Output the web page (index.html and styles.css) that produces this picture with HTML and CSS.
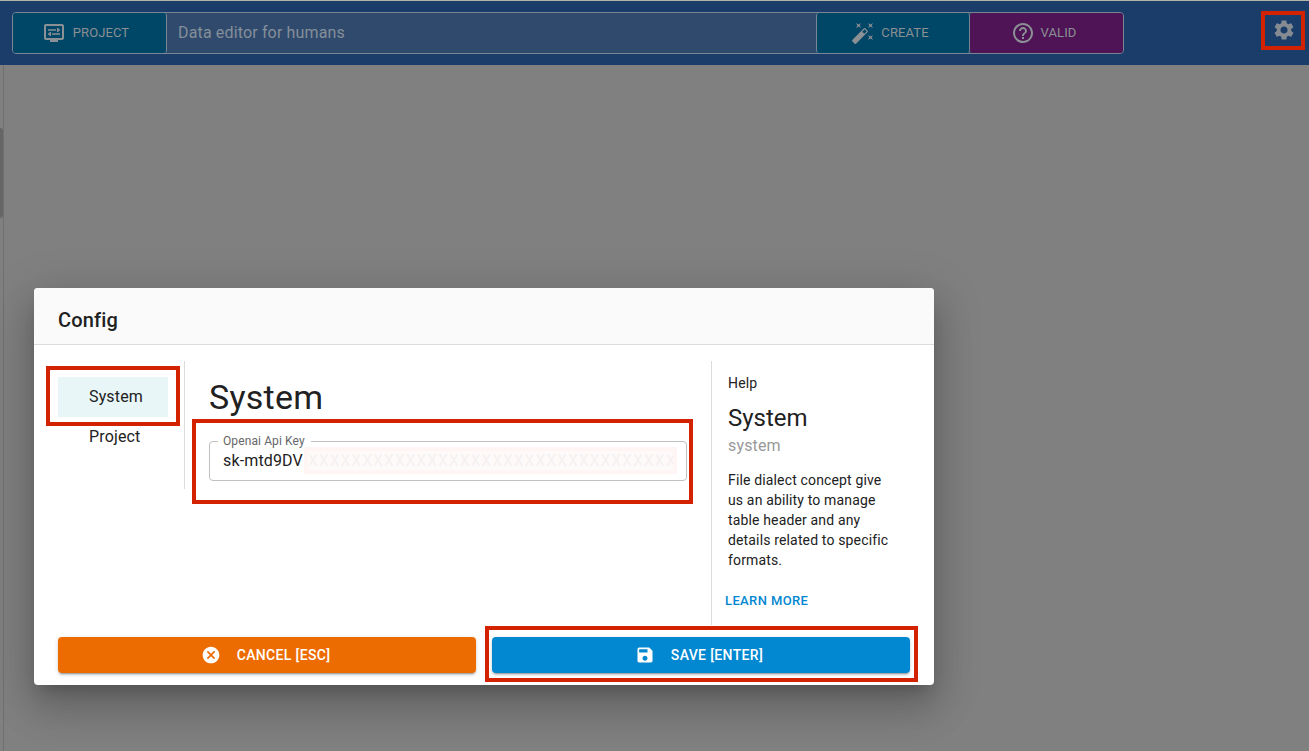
FILE: index.html
```html
<!DOCTYPE html>
<html lang="en">
<head>
<meta charset="utf-8">
<title>Data editor</title>
<link rel="stylesheet" href="styles.css">
</head>
<body>
<header class="topbar">
  <div class="controls">
    <div class="tool tool-project">
      <svg class="icon" viewBox="0 0 24 24"><path d="M20 3H4c-1.100 0-2 .9-2 2v12c0 1.100.9 2 2 2h4v2h8v-2h4c1.100 0 2-.9 2-2V5c0-1.100-.9-2-2-2m0 14H4V5h16z"/><path d="M6 8.250h8v1.500H6zM16.500 9.750H18v-1.500h-1.500V7H15v4h1.500zM10 12.250h8v1.500h-8zM7.500 15H9v-4H7.500v1.250H6v1.500h1.500z"/></svg>
      <span>PROJECT</span>
    </div>
    <div class="path">Data editor for humans</div>
    <div class="tool tool-create">
      <svg class="icon" viewBox="0 0 24 24"><path d="M7.500 5.600 10 7 8.600 4.500 10 2 7.500 3.400 5 2l1.400 2.500L5 7zm12 9.800L17 14l1.400 2.500L17 19l2.500-1.400L22 19l-1.400-2.500L22 14zM22 2l-2.500 1.400L17 2l1.400 2.500L17 7l2.500-1.400L22 7l-1.400-2.500zm-7.630 5.290a.996.996 0 0 0-1.410 0L1.290 18.960c-.39.39-.39 1.020 0 1.410l2.340 2.340c.39.39 1.020.39 1.410 0L16.700 11.050c.39-.39.39-1.020 0-1.410zm-1.030 5.490-2.120-2.120 2.440-2.440 2.120 2.120z"/></svg>
      <span>CREATE</span>
    </div>
    <div class="tool tool-valid">
      <svg class="icon" viewBox="0 0 24 24"><path d="M11 18h2v-2h-2zm1-16C6.480 2 2 6.480 2 12s4.480 10 10 10 10-4.480 10-10S17.520 2 12 2m0 18c-4.410 0-8-3.590-8-8s3.590-8 8-8 8 3.590 8 8-3.590 8-8 8m0-14c-2.210 0-4 1.790-4 4h2c0-1.100.9-2 2-2s2 .9 2 2c0 2-3 1.750-3 5h2c0-2.250 3-2.500 3-5 0-2.210-1.790-4-4-4"/></svg>
      <span>VALID</span>
    </div>
  </div>
  <div class="settings">
    <svg class="icon" viewBox="0 0 24 24"><path d="M19.140 12.940c.04-.3.060-.61.060-.94 0-.32-.02-.64-.07-.94l2.030-1.580c.18-.14.23-.41.12-.61l-1.920-3.320c-.12-.22-.37-.29-.59-.22l-2.390.96c-.5-.38-1.030-.7-1.620-.94l-.36-2.540c-.04-.24-.24-.41-.48-.41h-3.840c-.24 0-.43.17-.47.41l-.36 2.540c-.59.24-1.130.57-1.620.94l-2.390-.96c-.22-.08-.47 0-.59.22L2.740 8.870c-.12.21-.08.47.12.61l2.030 1.580c-.05.3-.09.63-.09.94s.02.64.07.94l-2.030 1.580c-.18.14-.23.41-.12.61l1.920 3.320c.12.22.37.29.59.22l2.390-.96c.5.38 1.030.7 1.620.94l.36 2.540c.05.24.24.41.48.41h3.840c.24 0 .44-.17.47-.41l.36-2.540c.59-.24 1.130-.56 1.620-.94l2.390.96c.22.08.47 0 .59-.22l1.920-3.320c.12-.22.07-.47-.12-.61zM12 15.600c-1.980 0-3.600-1.620-3.600-3.600s1.620-3.600 3.600-3.600 3.600 1.620 3.600 3.600-1.620 3.600-3.600 3.600"/></svg>
  </div>
</header>
<main class="workspace">
  <div class="rail"><div class="thumb"></div></div>
</main>

<section class="dialog">
  <h1 class="dialog-title">Config</h1>
  <div class="dialog-body">
    <nav class="sections">
      <div class="section active">System</div>
      <div class="section">Project</div>
      <div class="mark mark-section"></div>
    </nav>
    <div class="form">
      <h2>System</h2>
      <div class="field">
        <span class="label">Openai Api Key</span>
        <span class="value">sk-mtd9DV</span>
        <div class="mask">XXXXXXXXXXXXXXXXXXXXXXXXXXXXXXXXXX</div>
      </div>
      <div class="mark mark-field"></div>
    </div>
    <aside class="help">
      <div class="help-label">Help</div>
      <h3>System</h3>
      <div class="help-name">system</div>
      <p>File dialect concept give us an ability to manage table header and any details related to specific formats.</p>
      <a class="more">LEARN MORE</a>
    </aside>
  </div>
  <footer class="actions">
    <div class="button cancel">
      <svg viewBox="0 0 24 24"><path d="M12 2C6.470 2 2 6.470 2 12s4.470 10 10 10 10-4.470 10-10S17.530 2 12 2m5 13.590L15.590 17 12 13.410 8.410 17 7 15.590 10.590 12 7 8.410 8.410 7 12 10.590 15.590 7 17 8.410 13.410 12z"/></svg>
      <span>CANCEL [ESC]</span>
    </div>
    <div class="button save">
      <svg viewBox="0 0 24 24"><path d="M17 3H5c-1.110 0-2 .9-2 2v14c0 1.100.89 2 2 2h14c1.100 0 2-.9 2-2V7zm-5 16c-1.660 0-3-1.340-3-3s1.340-3 3-3 3 1.340 3 3-1.340 3-3 3m3-10H5V5h10z"/></svg>
      <span>SAVE [ENTER]</span>
      <div class="mark mark-save"></div>
    </div>
  </footer>
</section>
</body>
</html>
```
FILE: styles.css
```css
* { box-sizing: border-box; }
body {
  margin: 0;
  height: 751px;
  position: relative;
  overflow: hidden;
  display: flex;
  flex-direction: column;
  font-family: Roboto, "Liberation Sans", sans-serif;
  color: #212121;
  background: #808080;
}
svg { display: block; fill: currentColor; }

.topbar {
  height: 65px;
  flex: none;
  padding: 11px 4px 0 12px;
  border-top: 1px solid #b3b2a9;
  background: #1b3d69;
  display: flex;
  justify-content: space-between;
  color: #8d949b;
}
.controls {
  display: flex;
  width: 1112px;
  height: 42px;
  border: 1px solid #788592;
  border-radius: 4px;
  background: #2f4a6c;
}
.tool {
  display: flex;
  align-items: center;
  justify-content: center;
  gap: 7px;
  font-size: 13px;
  letter-spacing: .1px;
  color: #8b9095;
  border-radius: 3px;
}
.tool span { padding-bottom: 1px; }
.icon { width: 24px; height: 24px; }
.tool-project { width: 154px; background: #004666; border-right: 1px solid #788592; padding-right: 8px; }
.tool-create { width: 154px; background: #004666; border-left: 1px solid #788592; border-right: 1px solid #788592; padding-right: 6px; }
.tool-valid { flex: 1; background: #4e1455; padding-right: 6px; }
.tool-create, .tool-valid { gap: 6px; }
.path { width: 649px; padding-left: 11px; font-size: 16px; line-height: 39px; letter-spacing: .15px; color: #858f9a; }
.settings {
  width: 44px;
  height: 39px;
  margin-top: -1px;
  border: 4px solid #d22200;
  display: flex;
  justify-content: center;
  padding-top: 3px;
  padding-left: 1px;
  color: #858b91;
}

.workspace { flex: 1; display: flex; }
.rail { width: 4px; border-right: 1px solid #707070; padding-top: 63px; }
.thumb { height: 90px; background: #666; border-radius: 0 3px 3px 0; }

.dialog {
  position: absolute;
  left: 34px;
  top: 288px;
  width: 900px;
  height: 397px;
  display: flex;
  flex-direction: column;
  background: #fff;
  border-radius: 4px;
  box-shadow: 0 11px 15px -7px rgba(0,0,0,.2), 0 24px 38px 3px rgba(0,0,0,.14), 0 9px 46px 8px rgba(0,0,0,.12);
}
.dialog-title {
  margin: 0;
  height: 57px;
  padding: 16px 24px;
  font-size: 20px;
  line-height: 32px;
  font-weight: 500;
  letter-spacing: .15px;
  background: #fafafa;
  border-bottom: 1px solid #dcdcdc;
  border-radius: 4px 4px 0 0;
}
.dialog-body { display: flex; height: 280px; padding: 16px 24px 0; }
.mark { position: absolute; border: 4px solid #d22200; }

.sections { position: relative; width: 127px; height: 128px; padding: 16px 16px 0 0; border-right: 1px solid #dcdcdc; }
.section { height: 40px; padding-left: 31px; font-size: 16px; line-height: 39px; letter-spacing: .15px; }
.active { background: #e8f6f8; }
.mark-section { left: -12px; top: 5px; width: 134px; height: 60px; }

.form { position: relative; width: 526px; padding: 12px 24px 0; }
.form h2 { margin: 0; font-size: 34px; line-height: 48px; font-weight: 400; letter-spacing: .25px; }
.field {
  position: relative;
  width: 478px;
  height: 40px;
  margin-top: 20px;
  padding-left: 13px;
  border: 1px solid #c0c0c0;
  border-radius: 4px;
}
.label {
  position: absolute;
  left: 8px;
  top: -9px;
  padding: 0 6px 0 5px;
  font-size: 12px;
  line-height: 16px;
  letter-spacing: .11px;
  color: #666;
  background: #fff;
}
.value { font-size: 16px; line-height: 37px; letter-spacing: .15px; }
.mask {
  position: absolute;
  left: 94px;
  top: 5px;
  width: 373px;
  height: 27px;
  overflow: hidden;
  border: 4px solid #fef5f4;
  background: #fefafa;
  color: #f5f1f1;
  font-size: 16px;
  line-height: 19px;
  letter-spacing: .8px;
  white-space: nowrap;
}
.mark-field { left: 7px; top: 58px; width: 501px; height: 85px; }

.help { width: 199px; height: 264px; padding: 12px 16px 0; border-left: 1px solid #dcdcdc; }
.help-label { font-size: 14px; line-height: 20px; letter-spacing: .15px; }
.help h3 { margin: 9px 0 0; font-size: 24px; line-height: 32px; font-weight: 400; }
.help-name { font-size: 16px; line-height: 24px; letter-spacing: .15px; color: #999; }
.help p { width: 170px; margin: 12px 0 0; font-size: 14px; line-height: 20px; letter-spacing: .15px; }
.more { display: block; margin: 20px 0 0 -3px; font-size: 13px; line-height: 22px; font-weight: 500; letter-spacing: .38px; color: #0288d1; }

.actions { display: grid; grid-template-columns: 1fr 1fr; gap: 16px; padding: 12px 24px; }
.button {
  position: relative;
  height: 36px;
  display: flex;
  align-items: center;
  justify-content: center;
  gap: 16px;
  border-radius: 4px;
  font-size: 14px;
  font-weight: 500;
  letter-spacing: .35px;
  color: #fff;
  box-shadow: 0 3px 1px -2px rgba(0,0,0,.2), 0 2px 2px rgba(0,0,0,.14), 0 1px 5px rgba(0,0,0,.12);
}
.button svg { width: 20px; height: 20px; }
.cancel { background: #ed6c02; padding-right: 3px; }
.save { background: #0288d1; padding-right: 4px; }
.mark-save { left: -7px; top: -11px; width: 433px; height: 56px; }
```
